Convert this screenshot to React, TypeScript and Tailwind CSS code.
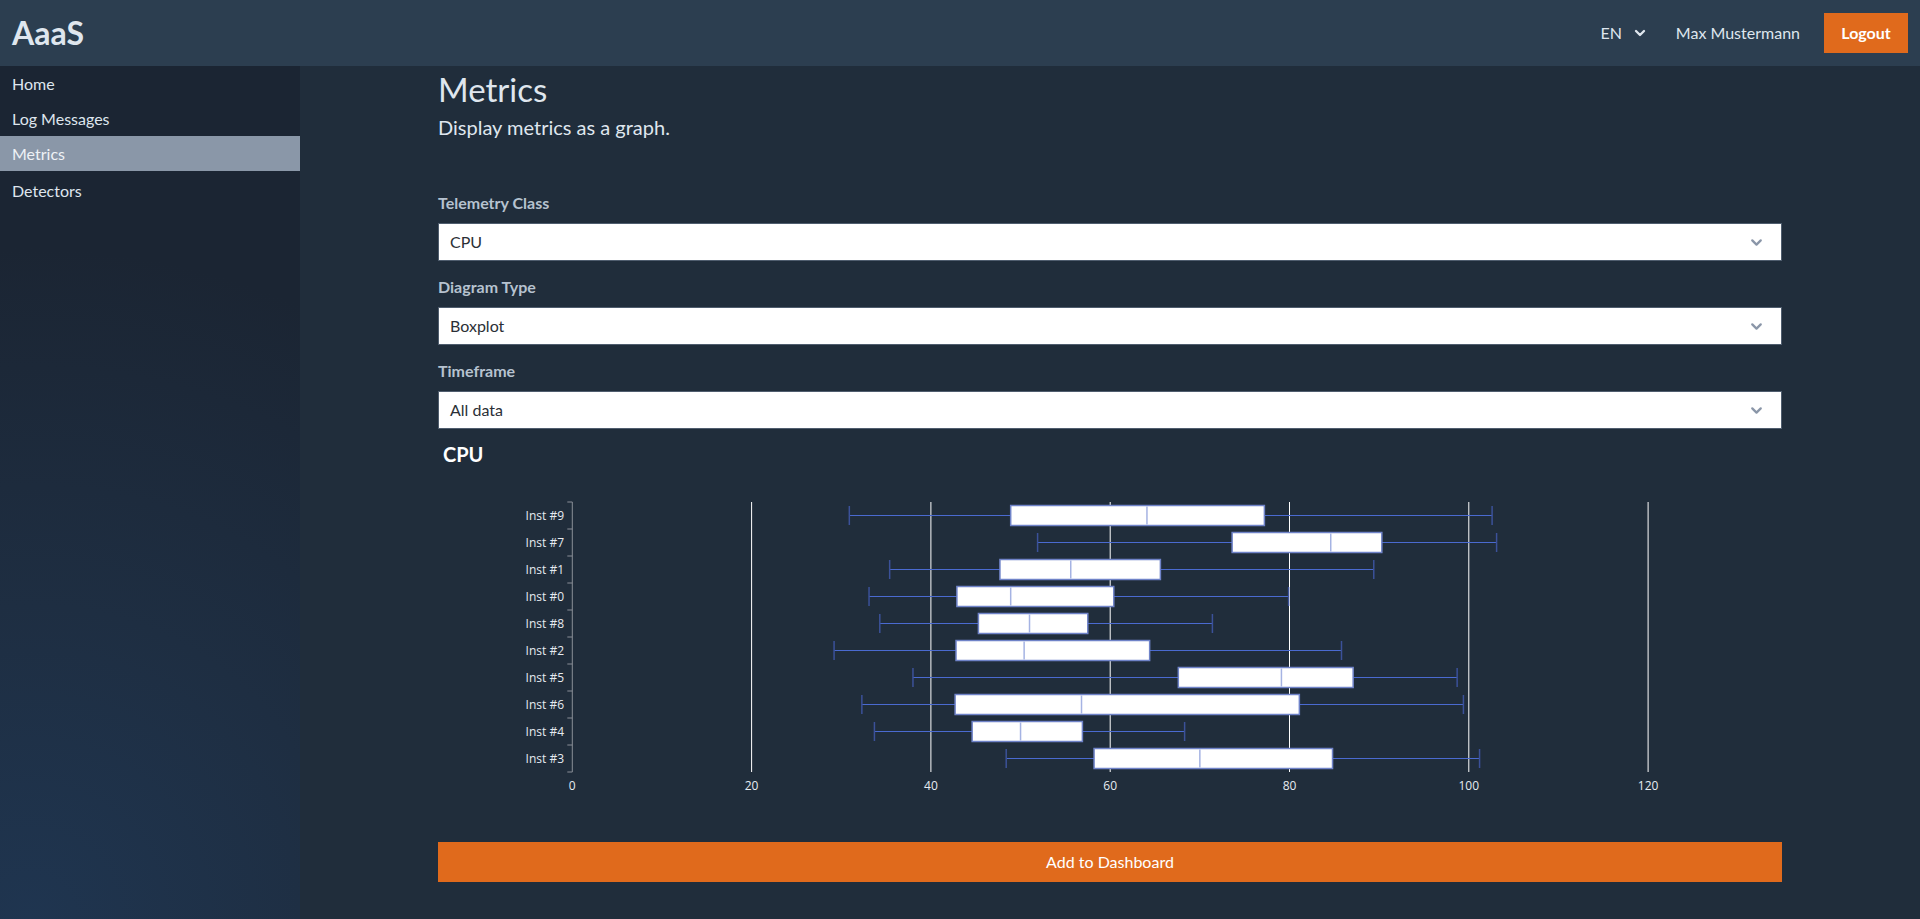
import React from "react";
import { ChevronDown } from "lucide-react";

type Row = { name: string; min: number; q1: number; med: number; q3: number; max: number };

const rows: Row[] = [
  { name: "Inst #9", min: 30.9, q1: 48.9, med: 64.1, q3: 77.2, max: 102.6 },
  { name: "Inst #7", min: 51.9, q1: 73.6, med: 84.6, q3: 90.3, max: 103.1 },
  { name: "Inst #1", min: 35.4, q1: 47.7, med: 55.6, q3: 65.6, max: 89.4 },
  { name: "Inst #0", min: 33.1, q1: 42.9, med: 48.9, q3: 60.4, max: 79.9 },
  { name: "Inst #8", min: 34.3, q1: 45.3, med: 51.0, q3: 57.5, max: 71.4 },
  { name: "Inst #2", min: 29.2, q1: 42.8, med: 50.4, q3: 64.4, max: 85.8 },
  { name: "Inst #5", min: 38.0, q1: 67.6, med: 79.1, q3: 87.1, max: 98.7 },
  { name: "Inst #6", min: 32.3, q1: 42.7, med: 56.8, q3: 81.1, max: 99.4 },
  { name: "Inst #4", min: 33.7, q1: 44.6, med: 50.0, q3: 56.9, max: 68.3 },
  { name: "Inst #3", min: 48.4, q1: 58.2, med: 70.0, q3: 84.8, max: 101.2 },
];

const X0 = 134.3;
const SX = 8.965;
const TOP = 32;
const RH = 27;
const sx = (v: number) => X0 + v * SX;

function Chart() {
  const bottom = TOP + RH * rows.length;
  return (
    <svg width="1344" height="330" className="block" style={{ fontFamily: "'Open Sans', 'DejaVu Sans', sans-serif" }}>
      {[20, 40, 60, 80, 100, 120].map((v) => (
        <line key={v} x1={sx(v)} x2={sx(v)} y1={TOP} y2={bottom} stroke="#ffffff" strokeWidth={1} />
      ))}
      <line x1={X0} x2={X0} y1={TOP} y2={bottom} stroke="#8a8f98" strokeWidth={1} />
      {Array.from({ length: rows.length + 1 }).map((_, k) => (
        <line key={k} x1={X0 - 5} x2={X0} y1={TOP + k * RH} y2={TOP + k * RH} stroke="#8a8f98" strokeWidth={1} />
      ))}
      {rows.map((r, i) => {
        const cy = TOP + RH * i + RH / 2;
        return (
          <g key={r.name}>
            <text x={126} y={cy + 4} textAnchor="end" fontSize="12" fill="#e6ebf1">
              {r.name}
            </text>
            <line x1={sx(r.min)} x2={sx(r.q1)} y1={cy} y2={cy} stroke="#4a6ad0" strokeWidth={1} />
            <line x1={sx(r.q3)} x2={sx(r.max)} y1={cy} y2={cy} stroke="#4a6ad0" strokeWidth={1} />
            <line x1={sx(r.min)} x2={sx(r.min)} y1={cy - 9.5} y2={cy + 9.5} stroke="#3b5199" strokeWidth={1.5} />
            <line x1={sx(r.max)} x2={sx(r.max)} y1={cy - 9.5} y2={cy + 9.5} stroke="#3b5199" strokeWidth={1.5} />
            <rect x={sx(r.q1)} y={cy - 10} width={sx(r.q3) - sx(r.q1)} height={20} fill="#ffffff" stroke="#6f83c8" strokeWidth={1.5} />
            <line x1={sx(r.med)} x2={sx(r.med)} y1={cy - 9} y2={cy + 9} stroke="#a5b3e3" strokeWidth={1.5} />
          </g>
        );
      })}
      {[0, 20, 40, 60, 80, 100, 120].map((v) => (
        <text key={v} x={sx(v)} y={320} textAnchor="middle" fontSize="12" fill="#e6ebf1">
          {v}
        </text>
      ))}
    </svg>
  );
}

function Select({ label, value }: { label: string; value: string }) {
  return (
    <div className="flex flex-col">
      <div className="text-[16px] font-bold leading-[20px] text-[#b6c2cf]">{label}</div>
      <div className="mt-[10px] flex h-[38px] items-center justify-between border border-[#4f5d6e] bg-white pl-[11px] pr-[16px]">
        <span className="text-[16px] text-[#2b2f36]">{value}</span>
        <ChevronDown size={17} strokeWidth={3.2} className="text-[#8a96a8]" />
      </div>
    </div>
  );
}

export default function App() {
  return (
    <div className="flex h-[919px] w-[1920px] flex-col overflow-hidden bg-[#202d3b]" style={{ fontFamily: "Lato, 'Open Sans', sans-serif" }}>
      <header className="flex h-[66px] shrink-0 items-center justify-between bg-[#2c3e50] pl-[12px] pr-[12px]">
        <div className="text-[32px] font-bold text-[#dfe6ee]">AaaS</div>
        <div className="flex items-center">
          <div className="flex items-center gap-[10px] text-[16px] text-[#dfe6ee]">
            <span>EN</span>
            <ChevronDown size={16} strokeWidth={3.5} />
          </div>
          <div className="ml-[28px] text-[16px] text-[#dfe6ee]">Max Mustermann</div>
          <button className="ml-[24px] h-[40px] w-[84px] bg-[#e06a1c] text-[16px] font-bold text-white">Logout</button>
        </div>
      </header>
      <div className="flex min-h-0 flex-1">
        <aside className="w-[300px] shrink-0 bg-[radial-gradient(circle_at_10%_100%,#1f3550_0%,#1e2e42_35%,#1b2533_75%)]">
          {["Home", "Log Messages", "Metrics", "Detectors"].map((n) => (
            <div
              key={n}
              className={
                "flex h-[35px] items-center pl-[12px] text-[16px] " +
                (n === "Metrics" ? "bg-[#8a97a8] text-[#eef2f6]" : "text-[#dfe6ee]") +
                (n === "Detectors" ? " pt-[4px]" : "")
              }
            >
              {n}
            </div>
          ))}
        </aside>
        <main className="flex-1">
          <div className="mx-auto w-[1344px]">
            <h1 className="pt-[4px] text-[33px] leading-[38px] text-[#dfe6ee]">Metrics</h1>
            <p className="mt-[8px] text-[20px] leading-[22px] text-[#dfe6ee]">Display metrics as a graph.</p>
            <div className="mt-[55px] flex flex-col gap-[16px]">
              <Select label="Telemetry Class" value="CPU" />
              <Select label="Diagram Type" value="Boxplot" />
              <Select label="Timeframe" value="All data" />
            </div>
            <div className="mt-[12px] pl-[5px] text-[20px] font-bold leading-[26px] text-white">CPU</div>
            <div className="mt-[3px]">
              <Chart />
            </div>
            <button className="mt-[42px] h-[40px] w-full bg-[#e06a1c] text-[16px] text-white">Add to Dashboard</button>
          </div>
        </main>
      </div>
    </div>
  );
}
